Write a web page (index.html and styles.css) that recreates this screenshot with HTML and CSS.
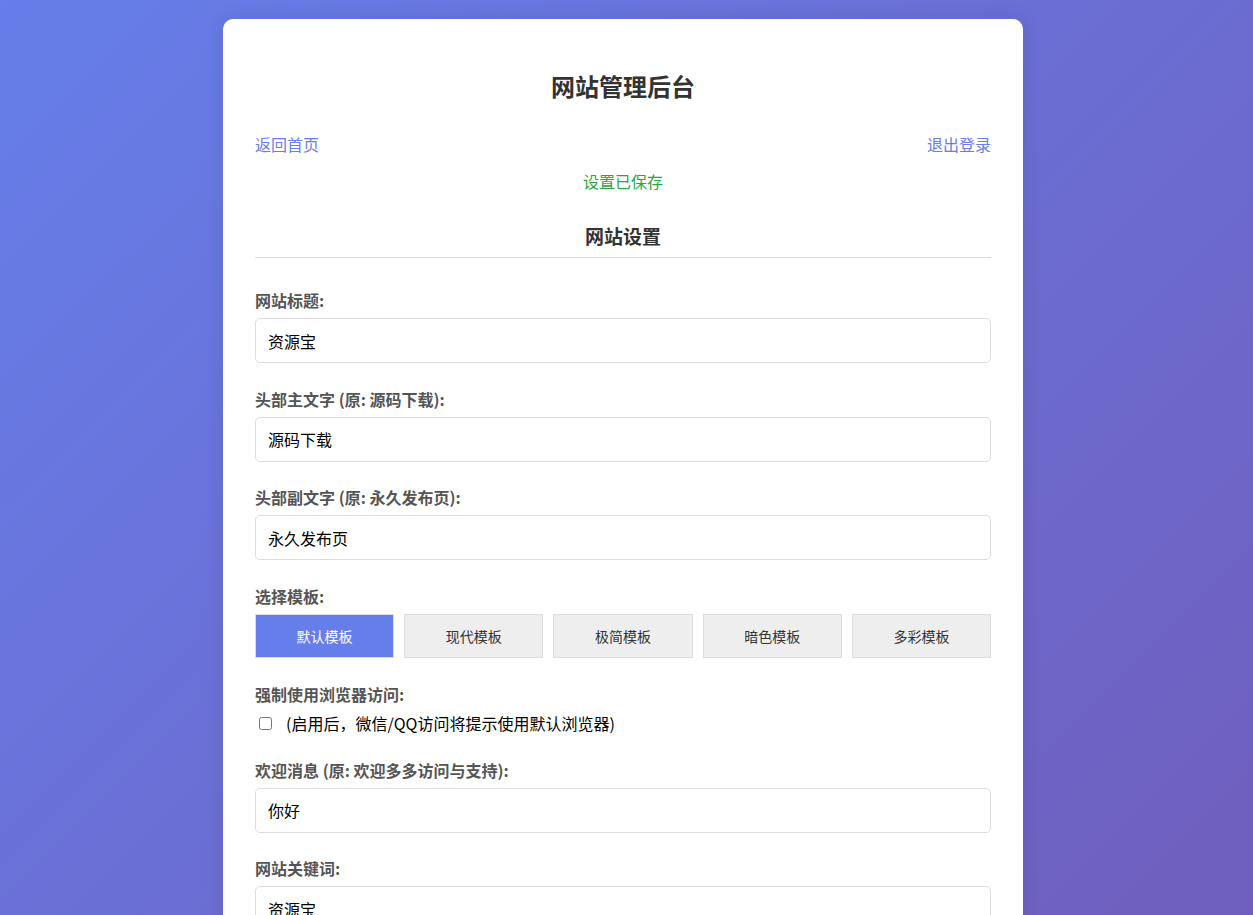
FILE: index.html
```html
<!DOCTYPE html>
<html lang="zh-CN">
<head>
<meta charset="utf-8">
<title>网站管理后台</title>
<link rel="stylesheet" href="styles.css">
</head>
<body>
<div class="container">
  <h1 class="title">网站管理后台</h1>
  <div class="nav">
    <a href="#" class="nav-link">返回首页</a>
    <a href="#" class="nav-link">退出登录</a>
  </div>
  <div class="message">设置已保存</div>
  <form class="settings">
    <h2 class="section-title">网站设置</h2>
    <div class="form-group">
      <label class="label">网站标题:</label>
      <input class="input" type="text" value="资源宝">
    </div>
    <div class="form-group">
      <label class="label">头部主文字 (原: 源码下载):</label>
      <input class="input" type="text" value="源码下载">
    </div>
    <div class="form-group">
      <label class="label">头部副文字 (原: 永久发布页):</label>
      <input class="input" type="text" value="永久发布页">
    </div>
    <div class="form-group">
      <label class="label">选择模板:</label>
      <div class="templates">
        <button type="button" class="tpl active">默认模板</button>
        <button type="button" class="tpl">现代模板</button>
        <button type="button" class="tpl">极简模板</button>
        <button type="button" class="tpl">暗色模板</button>
        <button type="button" class="tpl">多彩模板</button>
      </div>
    </div>
    <div class="form-group check-group">
      <label class="label">强制使用浏览器访问:</label>
      <div class="check-row">
        <input type="checkbox" class="checkbox">
        <span class="check-text">(启用后，微信/QQ访问将提示使用默认浏览器)</span>
      </div>
    </div>
    <div class="form-group">
      <label class="label">欢迎消息 (原: 欢迎多多访问与支持):</label>
      <input class="input" type="text" value="你好">
    </div>
    <div class="form-group">
      <label class="label">网站关键词:</label>
      <input class="input" type="text" value="资源宝">
    </div>
    <div class="form-group">
      <label class="label">网站描述:</label>
      <textarea class="input textarea">资源宝 - 源码下载永久发布页</textarea>
    </div>
    <div class="form-group">
      <label class="label">公告内容:</label>
      <textarea class="input textarea">欢迎访问本站</textarea>
    </div>
    <div class="form-group">
      <label class="label">底部版权信息:</label>
      <input class="input" type="text" value="© 资源宝 版权所有">
    </div>
    <div class="form-group">
      <label class="label">联系QQ:</label>
      <input class="input" type="text" value="">
    </div>
    <div class="form-group">
      <label class="label">联系邮箱:</label>
      <input class="input" type="text" value="">
    </div>
    <div class="form-group">
      <label class="label">统计代码:</label>
      <textarea class="input textarea"></textarea>
    </div>
    <button type="button" class="save">保存设置</button>
    <h2 class="section-title">修改密码</h2>
    <div class="form-group">
      <label class="label">原密码:</label>
      <input class="input" type="password" value="">
    </div>
    <div class="form-group">
      <label class="label">新密码:</label>
      <input class="input" type="password" value="">
    </div>
    <div class="form-group">
      <label class="label">确认新密码:</label>
      <input class="input" type="password" value="">
    </div>
    <button type="button" class="save">修改密码</button>
  </form>
</div>
</body>
</html>
```
FILE: styles.css
```css
* { box-sizing: border-box; }
html { min-height: 100%; }
body {
  margin: 0;
  padding: 19px 27px 40px 20px;
  font-family: "Noto Sans CJK SC", "Liberation Sans", sans-serif;
  background: linear-gradient(135deg, #667eea 0%, #764ba2 100%);
  min-height: 100vh;
  color: #333;
}
.container {
  max-width: 800px;
  margin: 0 auto;
  background: #fff;
  border-radius: 10px;
  padding: 32px;
  box-shadow: 0 0 20px rgba(0,0,0,0.1);
}
.title {
  margin: 18px 0 0;
  text-align: center;
  font-size: 24px;
  line-height: 34px;
  font-weight: bold;
  color: #333;
}
.nav {
  display: flex;
  justify-content: space-between;
  margin-top: 29px;
  line-height: 24px;
  font-size: 16px;
}
.nav-link {
  color: #667eea;
  text-decoration: none;
}
.message {
  margin-top: 13px;
  text-align: center;
  color: #28a745;
  font-size: 16px;
  line-height: 24px;
}
.settings { margin: 0; }
.section-title {
  margin: 29px 0 30px;
  padding-bottom: 7px;
  border-bottom: 1px solid #ddd;
  text-align: center;
  font-size: 19px;
  line-height: 28px;
  font-weight: bold;
  color: #333;
}
.form-group { margin-bottom: 23.7px; }
.label {
  display: block;
  font-weight: bold;
  color: #555;
  font-size: 16px;
  line-height: 24px;
  margin-bottom: 6px;
}
.check-group { margin-bottom: 23px; }
.check-group .label { margin-bottom: 5px; }
.input {
  display: block;
  width: 100%;
  height: 45px;
  padding: 12px;
  border: 1px solid #ddd;
  border-radius: 5px;
  font-family: "Noto Sans CJK SC", "Liberation Sans", sans-serif;
  font-size: 16px;
  line-height: 19px;
  color: #000;
  background: #fff;
}
.textarea {
  height: 100px;
  resize: vertical;
}
.templates {
  display: flex;
  gap: 10px;
}
.tpl {
  flex: 1;
  height: 44px;
  border: 1px solid #ddd;
  background: #eee;
  color: #333;
  font-family: "Noto Sans CJK SC", "Liberation Sans", sans-serif;
  font-size: 14px;
  padding: 0;
  border-radius: 0;
}
.tpl.active {
  background: #667eea;
  color: #fff;
}
.check-row {
  display: flex;
  align-items: center;
  height: 24px;
  line-height: 24px;
  font-size: 16px;
  color: #000;
}
.checkbox {
  width: 13px;
  height: 13px;
  margin: 2px 14px 0 4px;
}
.save {
  display: block;
  width: 100%;
  height: 46px;
  border: none;
  border-radius: 5px;
  background: #667eea;
  color: #fff;
  font-size: 16px;
  font-family: "Noto Sans CJK SC", "Liberation Sans", sans-serif;
}
```
